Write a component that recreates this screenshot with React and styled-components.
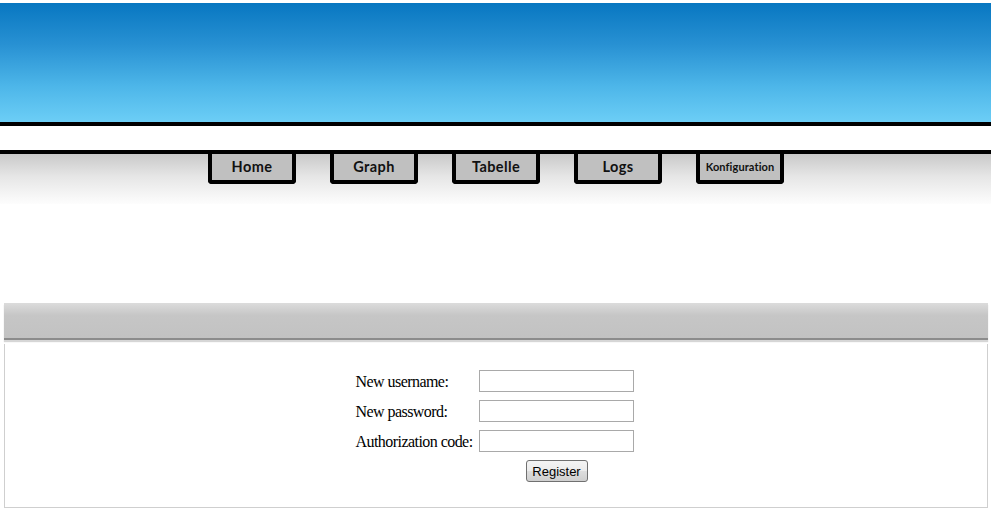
import React from "react";
import styled, { createGlobalStyle } from "styled-components";

const Global = createGlobalStyle`
  html, body { margin: 0; padding: 0; background: #fff; }
  body { font-family: "Liberation Serif", "Times New Roman", serif; }
`;

const Page = styled.div`
  width: 991px;
  padding-top: 3px;
`;

const Header = styled.header`
  height: 119px;
  background: linear-gradient(to bottom, #0877c1 0%, #2891d3 35%, #4db6e9 70%, #6ccef6 100%);
  border-bottom: 4px solid #000;
`;

const Strip = styled.div`
  height: 24px;
  background: #fff;
`;

const Nav = styled.nav`
  border-top: 4px solid #000;
  height: 50px;
  background: linear-gradient(to bottom, #c9c9c9 0%, #e6e6e6 45%, #fdfdfd 100%);
  display: flex;
  justify-content: center;
  align-items: flex-start;
  gap: 34px;
  padding-left: 1px;
`;

const Tab = styled.a`
  box-sizing: border-box;
  width: 88px;
  height: 30px;
  background: #c0c0c0;
  border: 4px solid #000;
  border-top: none;
  border-radius: 0 0 4px 4px;
  display: flex;
  align-items: center;
  justify-content: center;
  padding-bottom: 2px;
  color: #111;
  text-decoration: none;
  font-family: Lato, "Open Sans", sans-serif;
  font-weight: 700;
  font-size: ${(p) => (p.$small ? "11px" : "14.5px")};
  letter-spacing: ${(p) => (p.$small ? "0.1px" : "0.4px")};
`;

const Spacer = styled.div`
  height: 99px;
`;

const Panel = styled.section`
  margin: 0 3px 0 4px;
`;

const PanelBar = styled.div`
  height: 35px;
  background: linear-gradient(to bottom, #dcdcdc 0%, #c6c6c6 35%, #c2c2c2 100%);
  border-bottom: 2px solid #8c8c8c;
  box-shadow: 0 2px 1px #d6d6d6;
`;

const PanelBody = styled.div`
  margin-top: 4px;
  box-sizing: border-box;
  height: 164px;
  border: 1px solid #cfcfcf;
  border-top: none;
  display: flex;
  justify-content: center;
  padding-top: 26px;
`;

const Form = styled.form`
  display: grid;
  grid-template-columns: 123px 155px;
  grid-auto-rows: 22px;
  row-gap: 8px;
  margin-left: -3px;
`;

const Label = styled.label`
  display: flex;
  align-items: center;
  font-size: 16px;
  letter-spacing: -0.55px;
  color: #000;
  white-space: nowrap;
  padding-top: 1px;
`;

const Input = styled.input`
  box-sizing: border-box;
  width: 155px;
  height: 22px;
  margin: 0;
  border: 1px solid #a9a9a9;
  background: #fff;
  outline: none;
`;

const ButtonCell = styled.div`
  grid-column: 2;
  display: flex;
  justify-content: center;
  padding-left: 1px;
`;

const Button = styled.button`
  box-sizing: border-box;
  width: 62px;
  height: 22px;
  margin: 0;
  padding: 0;
  border: 1px solid #707070;
  border-radius: 3px;
  background: linear-gradient(to bottom, #f4f4f4 0%, #ebebeb 50%, #dddddd 51%, #cfcfcf 100%);
  font-family: "Liberation Sans", Arial, sans-serif;
  font-size: 13px;
  color: #000;
`;

const tabs = ["Home", "Graph", "Tabelle", "Logs", "Konfiguration"];

export default function App() {
  return (
    <Page>
      <Global />
      <Header />
      <Strip />
      <Nav>
        {tabs.map((t) => (
          <Tab key={t} href="#" $small={t === "Konfiguration"}>
            {t}
          </Tab>
        ))}
      </Nav>
      <Spacer />
      <Panel>
        <PanelBar />
        <PanelBody>
          <Form onSubmit={(e) => e.preventDefault()}>
            <Label htmlFor="u">New username:</Label>
            <Input id="u" type="text" />
            <Label htmlFor="p">New password:</Label>
            <Input id="p" type="password" />
            <Label htmlFor="c">Authorization code:</Label>
            <Input id="c" type="text" />
            <ButtonCell>
              <Button type="submit">Register</Button>
            </ButtonCell>
          </Form>
        </PanelBody>
      </Panel>
    </Page>
  );
}
